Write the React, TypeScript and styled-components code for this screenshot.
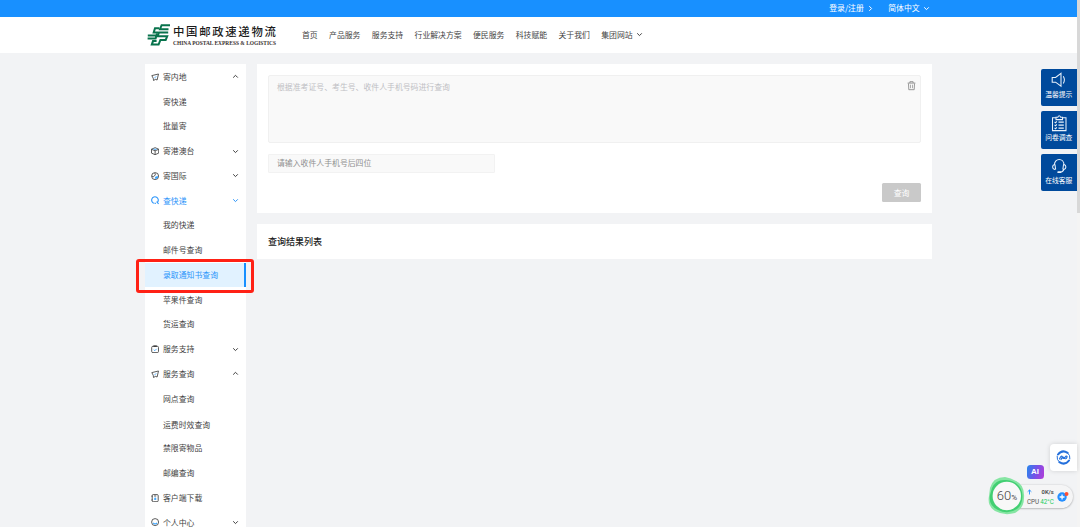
import React from 'react';
import styled, { createGlobalStyle, css } from 'styled-components';

const GlobalStyle = createGlobalStyle`
  * { box-sizing: border-box; }
  html, body { margin: 0; height: 527px; overflow: hidden; }
  body {
    background: #f2f3f5;
    color: #444;
    font-family: "Noto Sans CJK SC", "Noto Sans", sans-serif;
    font-size: 7.87px;
    line-height: 12px;
  }
`;

const Window = styled.div`
  display: flex;
  width: 1080px;
  height: 527px;
  overflow: hidden;
`;
const Page = styled.div`
  flex: 1;
  min-width: 0;
`;
const Scrollbar = styled.div`
  width: 3px;
  background: #f4f4f4;
`;
const Thumb = styled.div`
  height: 213px;
  background: #d8d8d8;
`;

const TopBar = styled.div`
  display: flex;
  justify-content: flex-end;
  align-items: center;
  gap: 14px;
  height: 17px;
  padding: 0 147px 1px 0;
  background: #1890ff;
  color: #fff;
`;
const TopLink = styled.a`
  display: flex;
  align-items: center;
  gap: 3.4px;
`;

const Header = styled.header`
  display: flex;
  align-items: center;
  height: 36px;
  padding-left: 147px;
  background: #fff;
`;
const Brand = styled.div`
  display: flex;
  align-items: center;
  gap: 3px;
  width: 130px;
`;
const BrandText = styled.div`
  width: 104px;
`;
const BrandName = styled.div`
  height: 13px;
  margin-top: 2px;
  color: #1b1b1b;
  font-size: 11.4px;
  font-weight: 500;
  line-height: 13px;
  letter-spacing: 1.68px;
  white-space: nowrap;
`;
const BrandLatin = styled.div`
  display: flex;
  height: 9px;
`;
const Nav = styled.nav`
  display: flex;
  gap: 11.3px;
  margin: 0 0 1px 25px;
`;
const NavItem = styled.a`
  display: flex;
  align-items: center;
  gap: 3.2px;
  white-space: nowrap;
`;

const Body = styled.div`
  display: flex;
  align-items: flex-start;
  gap: 11px;
  padding: 11px 0 0 145px;
`;
const Sidebar = styled.aside`
  width: 101px;
  height: 480px;
  padding-top: 0.4px;
  background: #fff;
`;
const MenuRow = styled.div<{ $tone?: 'open' | 'selected'; $nudge?: number }>`
  position: relative;
  display: flex;
  align-items: center;
  height: 24.77px;
  padding: ${p => p.$nudge || 0}px 7.4px 0 6px;
  color: ${p => (p.$tone ? '#2a94fa' : '#3f3f3f')};
  ${p => p.$tone === 'selected' && css`
    background: #e1f2ff;
    border-right: 2.6px solid #1890ff;
  `}
`;
const IconSlot = styled.span`
  display: flex;
  width: 12px;
`;
const Label = styled.span`
  flex: 1;
  white-space: nowrap;
`;
const Callout = styled.div`
  position: absolute;
  z-index: 2;
  left: -9px;
  top: -3.7px;
  width: 118px;
  height: 34px;
  border: 3.4px solid #ff2115;
  border-radius: 3px;
`;

const Main = styled.main`
  width: 675px;
`;
const Panel = styled.section`
  height: 149px;
  padding: 11px;
  background: #fff;
`;
const NumbersBox = styled.div`
  display: flex;
  justify-content: space-between;
  height: 68px;
  padding: 5px 4px 0 8px;
  border: 1px solid #f0f0f0;
  border-radius: 2px;
  background: #f9f9f9;
  color: #bfbfc4;
`;
const PhoneField = styled.div`
  width: 227px;
  height: 19px;
  margin-top: 11px;
  padding: 2px 8px;
  border: 1px solid #f2f2f2;
  border-radius: 1px;
  background: #f9f9f9;
  color: #8f8f8f;
`;
const Actions = styled.div`
  display: flex;
  justify-content: flex-end;
  margin-top: 10px;
`;
const QueryButton = styled.button`
  width: 39px;
  height: 19px;
  padding: 0;
  border: 0;
  border-radius: 1.5px;
  background: #c9c9c9;
  color: #fff;
  font: inherit;
`;
const ResultPanel = styled.section`
  display: flex;
  align-items: center;
  height: 35px;
  margin-top: 11px;
  padding-left: 11px;
  background: #fff;
  color: #222;
  font-size: 9px;
  font-weight: 500;
`;

const SideTools = styled.div`
  position: absolute;
  left: 1040.5px;
  top: 68.5px;
  display: flex;
  flex-direction: column;
  gap: 5.4px;
`;
const SideTool = styled.div`
  display: flex;
  flex-direction: column;
  align-items: center;
  width: 36.5px;
  height: 37.4px;
  padding-top: 3.5px;
  border-radius: 2px 0 0 2px;
  background: #004a9c;
  color: #fff;
  font-size: 6.8px;
  line-height: 10px;
  white-space: nowrap;
`;

const Assistant = styled.div`
  position: absolute;
  left: 1050px;
  top: 444px;
  display: flex;
  align-items: center;
  width: 27px;
  height: 27px;
  padding-left: 6px;
  border-radius: 4px 0 0 4px;
  background: #fff;
  box-shadow: 0 0 5px rgba(0, 0, 0, 0.14);
`;
const AiBadge = styled.div`
  position: absolute;
  left: 1026.5px;
  top: 465px;
  width: 17px;
  height: 14px;
  border-radius: 3.5px;
  background: linear-gradient(105deg, #2587ec, #7353e8 50%, #b53cd8);
  color: #fff;
  font: bold 8px/14px "Liberation Sans", sans-serif;
  text-align: center;
`;
const Monitor = styled.div`
  position: absolute;
  left: 1008px;
  top: 485px;
  display: flex;
  align-items: center;
  gap: 3px;
  width: 64.5px;
  height: 23px;
  padding: 0 4px 0 19px;
  border-radius: 12px;
  background: #f5f5f6;
  box-shadow: 0 0.5px 2px rgba(0, 0, 0, 0.35);
`;
const Stats = styled.div`
  width: 27.5px;
  font: 6.3px/10px Roboto, sans-serif;
  color: #555;
  white-space: nowrap;
`;
const StatLine = styled.div`
  display: flex;
  justify-content: space-between;
  align-items: center;
`;
const Speed = styled.b`
  font-size: 5.8px;
  font-weight: 500;
  color: #333;
`;
const Temp = styled.span`
  color: #22cc60;
`;
const Gauge = styled.div`
  position: absolute;
  left: 988px;
  top: 476px;
  width: 38px;
  height: 40px;
`;
const GaugeValue = styled.div`
  position: absolute;
  left: 0;
  top: 12px;
  width: 38px;
  color: #444;
  font: 300 13px/16px Roboto, sans-serif;
  text-align: center;
`;
const Percent = styled.span`
  font-size: 8px;
  font-weight: 400;
`;

type Direction = 'up' | 'down' | 'right';
const chevrons: Record<Direction, string> = {
  up: 'M1.2 4.6 3.5 2.3 5.8 4.6',
  down: 'M1.2 2.3 3.5 4.6 5.8 2.3',
  right: 'M2.3 1.2 4.6 3.5 2.3 5.8',
};
const Chevron = ({ dir }: { dir: Direction }) => (
  <svg width="7" height="7" viewBox="0 0 7 7" fill="none" stroke="currentColor" strokeWidth="1">
    <path d={chevrons[dir]} />
  </svg>
);

const Logo = () => (
  <Brand>
    <svg width="23" height="22" viewBox="0 0 23 22" fill="none" stroke="#08734c" strokeWidth="2">
      <path d="M23 1.2H14.6L13 5.2H21.5" />
      <path d="M21.2 8.6H11.9L10.6 12.3H20.2L18.7 16H13.4L11.6 20.6H4.8L6 17.1H9.6" />
      <path d="M12.3 4.2H8L6.7 8.4H11" />
      <path d="M9.2 11.5H.8M.6 14.4H8.6L10 9.5" />
    </svg>
    <BrandText>
      <BrandName>中国邮政速递物流</BrandName>
      <BrandLatin>
        <svg width="104" height="9" viewBox="0 0 104 9" overflow="visible">
          <text x="0" y="6.6" textLength="103" lengthAdjust="spacingAndGlyphs" fill="#3a3230" fontFamily="'Liberation Serif', serif" fontSize="5.6" fontWeight="700">CHINA POSTAL EXPRESS &amp; LOGISTICS</text>
        </svg>
      </BrandLatin>
    </BrandText>
  </Brand>
);

type IconName = 'send' | 'box' | 'globe' | 'search' | 'clip' | 'phone' | 'user';
const accent = '#37a3ff';
const iconShapes: Record<IconName, React.ReactNode> = {
  send: <><path d="M.8 2.6 7.5 1 6.1 7 4.2 6.3 2.6 7.7 2.2 5.2Z" /><path d="M3.4 5.2 5.2 3.3" stroke={accent} /></>,
  box: <><path d="M4.1 .7 7.7 2.2V6.1L4.1 7.7.5 6.1V2.2Z" /><path d="M.5 2.3 4.1 3.8 7.7 2.3M4.1 3.8V7.7" /><path d="M2.4 1.9 4.1 2.6 5.8 1.9" stroke={accent} /></>,
  globe: <><circle cx="4.1" cy="4.1" r="3.5" /><path d="M1 4.2 2.5 4.8 4.4 2.8 3.8 1" /><path d="M4.7 6.8 5.1 5.3 6.9 5" stroke={accent} strokeWidth="1.8" /></>,
  search: <><path d="M3.3 7.3A3.3 3.3 0 1 1 6.5 6.2" strokeWidth="1.1" /><path d="M5.6 5.6 7.6 7.8M3.7 7.4H4.8" strokeWidth="1.1" /></>,
  clip: <><rect x=".7" y="1.3" width="6.8" height="6.3" rx="1.2" /><path d="M2.4 1.2H5.8" strokeWidth="1.6" /><path d="m2.7 4.6 1.1 1.1 1.9-1.9" stroke={accent} /></>,
  phone: <><rect x="1.2" y=".6" width="6" height="7.1" rx="1" /><path d="M3.1 2H5.2M.4 2.2H1.7M.4 6H1.7" /><path d="M4.2 3.6V6M3 5H5.4" stroke={accent} strokeWidth="1.2" /></>,
  user: <><circle cx="4.1" cy="4.1" r="3.5" /><path d="M2.2 4.8Q4.1 7.1 6 4.8" stroke={accent} strokeWidth="1.2" /></>,
};
const MenuIcon = ({ name }: { name: IconName }) => (
  <svg width="8.3" height="8.3" viewBox="0 0 8.3 8.3" fill="none" stroke="currentColor" strokeWidth=".85" strokeLinejoin="round">
    {iconShapes[name]}
  </svg>
);

const TrashIcon = () => (
  <svg width="9" height="10" viewBox="0 0 9 10" fill="none" stroke="#8d8d8d" strokeWidth=".9">
    <path d="M.6 2.1H8.4M2.9 2V.7H6.1V2M1.5 2.5 1.8 8.7H7.2L7.5 2.5" />
    <path d="M3.5 3.7V7.2M5.5 3.7V7.2" strokeWidth=".7" />
  </svg>
);

const toolShapes = {
  horn: <><path d="M1.2 5.4H4.6L10 1.4V14.2L4.6 10.2H1.2Z" /><path d="M12.3 4.2Q14.5 7.8 12.3 11.4" /></>,
  survey: <><path d="M5 2.8H1.5V15.6H15V2.8H11.5M5 4.6V2.2H6.8Q8.2-.6 9.7 2.2H11.5V4.6Z" /><path d="M3.6 7 4.6 7.8 5.8 6.4M7.5 7.1H12.8M3.6 10 4.6 10.8 5.8 9.4M7.5 10.1H12.8M3.6 13 4.6 13.8 5.8 12.4M7.5 13.1H12.8" /></>,
  headset: <><path d="M3.4 7C3.4-.4 13-.4 13 7M13 11Q12.2 14 9.1 14.2" /><path d="M3.5 6.5Q1.6 7 1.6 8.9T3.8 11.4L4.6 10.9 4 6.9ZM12.9 6.5Q14.9 7 14.9 8.9T12.7 11.4L11.9 10.9 12.5 6.9Z" /><path d="M7.2 14.2H9.3" strokeWidth="1.8" strokeLinecap="round" /></>,
};
const ToolIcon = ({ name }: { name: keyof typeof toolShapes }) => (
  <svg width="16.5" height="17" viewBox="0 0 16.5 17" fill="none" stroke="#e9f2fb" strokeWidth="1.05">
    {toolShapes[name]}
  </svg>
);

interface Item {
  label: string;
  icon?: IconName;
  dir?: Direction;
  tone?: 'open' | 'selected';
  nudge?: number;
}
const menu: Item[] = [
  { label: '寄内地', icon: 'send', dir: 'up' },
  { label: '寄快递' },
  { label: '批量寄' },
  { label: '寄港澳台', icon: 'box', dir: 'down' },
  { label: '寄国际', icon: 'globe', dir: 'down' },
  { label: '查快递', icon: 'search', dir: 'down', tone: 'open' },
  { label: '我的快递' },
  { label: '邮件号查询' },
  { label: '录取通知书查询', tone: 'selected' },
  { label: '苹果件查询' },
  { label: '货运查询' },
  { label: '服务支持', icon: 'clip', dir: 'down' },
  { label: '服务查询', icon: 'send', dir: 'up' },
  { label: '网点查询' },
  { label: '运费时效查询', nudge: 4 },
  { label: '禁限寄物品' },
  { label: '邮编查询' },
  { label: '客户端下载', icon: 'phone' },
  { label: '个人中心', icon: 'user', dir: 'down' },
];
const navItems = ['首页', '产品服务', '服务支持', '行业解决方案', '便民服务', '科技赋能', '关于我们'];

export default function App() {
  return (
    <>
      <GlobalStyle />
      <Window>
        <Page>
          <TopBar>
            <TopLink>登录/注册<Chevron dir="right" /></TopLink>
            <TopLink>简体中文<Chevron dir="down" /></TopLink>
          </TopBar>
          <Header>
            <Logo />
            <Nav>
              {navItems.map(n => <NavItem key={n}>{n}</NavItem>)}
              <NavItem>集团网站<Chevron dir="down" /></NavItem>
            </Nav>
          </Header>
          <Body>
            <Sidebar>
              {menu.map(m => (
                <MenuRow key={m.label} $tone={m.tone} $nudge={m.nudge}>
                  <IconSlot>{m.icon && <MenuIcon name={m.icon} />}</IconSlot>
                  <Label>{m.label}</Label>
                  {m.dir && <Chevron dir={m.dir} />}
                  {m.tone === 'selected' && <Callout />}
                </MenuRow>
              ))}
            </Sidebar>
            <Main>
              <Panel>
                <NumbersBox>
                  <span>根据准考证号、考生号、收件人手机号码进行查询</span>
                  <TrashIcon />
                </NumbersBox>
                <PhoneField>请输入收件人手机号后四位</PhoneField>
                <Actions><QueryButton>查询</QueryButton></Actions>
              </Panel>
              <ResultPanel>查询结果列表</ResultPanel>
            </Main>
          </Body>
        </Page>
        <Scrollbar><Thumb /></Scrollbar>
      </Window>
      <SideTools>
        <SideTool><ToolIcon name="horn" />温馨提示</SideTool>
        <SideTool><ToolIcon name="survey" />问卷调查</SideTool>
        <SideTool><ToolIcon name="headset" />在线客服</SideTool>
      </SideTools>
      <Assistant>
        <svg width="15" height="15" viewBox="0 0 15 15" fill="none" stroke="#2470dc" strokeLinecap="round">
          <path d="M2 4.5Q6-.8 11.6 2.8" strokeWidth="2" />
          <path d="M13 10.5Q9 15.8 3.4 12.2" strokeWidth="2" />
          <path d="M1.1 6.2Q.6 10 3.3 12M13.9 8.8Q14.4 5 11.7 3" strokeWidth="1" />
          <path d="M3.5 9Q5.5 4.5 6.5 7.2T10 6.2Q12 6 10.3 8.3M5 9.5Q7 5.5 8 8.2L9.6 8.7" strokeWidth="1.2" />
        </svg>
      </Assistant>
      <AiBadge>AI</AiBadge>
      <Monitor>
        <Stats>
          <StatLine>
            <svg width="5" height="6" viewBox="0 0 5 6" fill="none" stroke="#268fff" strokeWidth=".9"><path d="M2.5 5.5V1M.6 2.8 2.5 1 4.4 2.8" /></svg>
            <Speed>0K/s</Speed>
          </StatLine>
          <StatLine><span>CPU</span><Temp>42°C</Temp></StatLine>
        </Stats>
        <svg width="12" height="12" viewBox="0 0 12 12">
          <circle cx="5.2" cy="6" r="4.8" fill="#268fff" />
          <path d="M5.2 3.5V8.5M2.7 6H7.7" stroke="#fff" strokeWidth="1.3" />
          <circle cx="9.8" cy="3" r="2" fill="#ff5033" />
        </svg>
      </Monitor>
      <Gauge>
        <svg width="38" height="40" viewBox="0 0 38 40">
          <path d="M2 12Q5 1 17 1 23 2 28 5 37 9 36 22 36 32 27 37 16 40 7 35-1 30 1 20Z" fill="#86e5a3" />
          <path d="M4 12Q8 3 18 4 31 5 34 16 36 27 29 33 20 39 10 34 0 29 2 19Z" fill="#42cf72" />
          <circle cx="18.8" cy="20" r="14.2" fill="#f8f8f8" />
        </svg>
        <GaugeValue>60<Percent>%</Percent></GaugeValue>
      </Gauge>
    </>
  );
}
